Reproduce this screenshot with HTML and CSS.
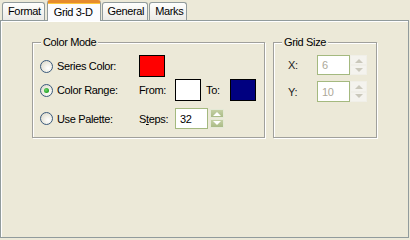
FILE: index.html
```html
<!DOCTYPE html>
<html>
<head>
<meta charset="utf-8">
<link rel="stylesheet" href="styles.css">
</head>
<body>
<div class="tabstrip">
  <div class="tab">Format</div>
  <div class="tab active">Grid 3-D</div>
  <div class="tab">General</div>
  <div class="tab">Marks</div>
</div>
<div class="panel">
  <fieldset class="group group-mode">
    <legend>Color Mode</legend>
    <div class="mode-grid">
      <label class="opt r1"><span class="radio"></span>Series Color:</label>
      <span class="swatch red r1 c2"></span>

      <label class="opt r2"><span class="radio checked"></span>Color Range:</label>
      <span class="lbl r2 c2">From:</span>
      <span class="swatch white r2 c3"></span>
      <span class="lbl to r2 c4">To:</span>
      <span class="swatch navy r2 c5"></span>

      <label class="opt r3"><span class="radio"></span>Use Palette:</label>
      <span class="lbl r3 c2">S<u>t</u>eps:</span>
      <div class="spinrow r3 c3">
        <span class="edit">32</span>
        <span class="spin">
          <span class="sbtn"><svg width="8" height="5" viewBox="0 0 8 5"><path d="M0 5 L4 1 L8 5 Z" fill="#fff"/></svg></span>
          <span class="sbtn"><svg width="8" height="5" viewBox="0 0 8 5"><path d="M0 0 L4 4 L8 0 Z" fill="#fff"/></svg></span>
        </span>
      </div>
    </div>
  </fieldset>
  <fieldset class="group group-size">
    <legend>Grid Size</legend>
    <div class="size-grid">
      <span class="lbl">X:</span>
      <div class="dspin">
        <span class="edit disabled">6</span>
        <span class="spin dis">
          <span class="sbtn"><svg width="8" height="5" viewBox="0 0 8 5"><path d="M0 5 L4 1 L8 5 Z" fill="#cac8bb"/></svg></span>
          <span class="sbtn"><svg width="8" height="5" viewBox="0 0 8 5"><path d="M0 0 L4 4 L8 0 Z" fill="#cac8bb"/></svg></span>
        </span>
      </div>
      <span class="lbl">Y:</span>
      <div class="dspin">
        <span class="edit disabled">10</span>
        <span class="spin dis">
          <span class="sbtn"><svg width="8" height="5" viewBox="0 0 8 5"><path d="M0 5 L4 1 L8 5 Z" fill="#cac8bb"/></svg></span>
          <span class="sbtn"><svg width="8" height="5" viewBox="0 0 8 5"><path d="M0 0 L4 4 L8 0 Z" fill="#cac8bb"/></svg></span>
        </span>
      </div>
    </div>
  </fieldset>
</div>
</body>
</html>
```

FILE: styles.css
```css
html, body {
  margin: 0;
  padding: 0;
}
body {
  width: 410px;
  height: 239px;
  overflow: hidden;
  background: #ECE9D8;
  font-family: "Liberation Sans", Arial, sans-serif;
  font-size: 11px;
  letter-spacing: -0.35px;
  color: #000;
}

.tabstrip {
  display: flex;
  align-items: flex-end;
  height: 20px;
  padding-left: 2px;
  position: relative;
  z-index: 1;
}
.tab {
  box-sizing: border-box;
  height: 18px;
  line-height: 17px;
  padding: 0 3px 0 5px;
  margin-right: 1px;
  border: 1px solid #919B9C;
  border-bottom: 0;
  border-radius: 3px 3px 0 0;
  background: linear-gradient(#fefefd, #ecebe6);
}
.tab.active {
  height: 21px;
  line-height: 18px;
  margin-bottom: -1px;
  margin-left: 1px;
  padding: 0 7px 0 6px;
  background: #fcfcfe;
  border-top: 3px solid #e68b2c;
  box-shadow: inset 0 1px 0 #ffc83c;
}

.panel {
  box-sizing: border-box;
  width: 409px;
  height: 218px;
  border: 1px solid #919B9C;
  box-shadow: inset 1px 1px 0 #fff;
  display: flex;
  align-items: flex-start;
  gap: 8px;
  padding: 15px 0 0 31px;
}

.group {
  box-sizing: border-box;
  margin: 0;
  min-inline-size: 0;
  border: 1px solid #a0a09c;
  box-shadow: 1px 1px 0 #fff, inset 1px 1px 0 #fff;
  padding: 6px 0 0 0;
  height: 102px;
}
.group legend {
  margin-left: 8px;
  padding: 0 2px;
  line-height: 13px;
  background: #ECE9D8;
}
.group-mode {
  width: 233px;
}
.group-size {
  width: 104px;
}

.mode-grid {
  display: grid;
  margin-left: 7px;
  grid-template-columns: 99px 36px 26px 29px 26px;
  grid-template-rows: 24px 29px 21px;
}
.mode-grid > * {
  align-self: start;
}
.r1 { grid-row: 1; height: 22px; }
.r2 { grid-row: 2; height: 22px; }
.r3 { grid-row: 3; height: 21px; }
.c2 { grid-column: 2; }
.c3 { grid-column: 3; }
.c4 { grid-column: 4; }
.c5 { grid-column: 5; }
.opt { grid-column: 1; }
.spinrow { grid-column: 3 / span 3; }

.opt, .lbl {
  display: flex;
  align-items: center;
}
.opt {
  gap: 4px;
}
.lbl.to {
  padding-left: 5px;
}
.lbl u {
  text-decoration-thickness: 1px;
  text-underline-offset: 1px;
}

.radio {
  box-sizing: border-box;
  width: 13px;
  height: 13px;
  border-radius: 50%;
  border: 1px solid #3a5a7c;
  background: radial-gradient(circle at 65% 65%, #ffffff 0%, #f2f1ea 35%, #d6d3c4 100%);
  display: flex;
  align-items: center;
  justify-content: center;
}
.radio.checked::after {
  content: "";
  width: 5px;
  height: 5px;
  border-radius: 50%;
  background: radial-gradient(circle at 40% 40%, #6fd66f, #21a121 70%);
}

.swatch {
  box-sizing: border-box;
  display: block;
  width: 26px;
  border: 1px solid #000;
}
.swatch.red { background: #ff0000; }
.swatch.white { background: #ffffff; }
.swatch.navy { background: #000080; }

.spinrow, .dspin {
  display: flex;
  align-items: stretch;
}
.spinrow {
  gap: 2px;
}
.edit {
  box-sizing: border-box;
  width: 33px;
  border: 1px solid #a4b97f;
  background: #fff;
  padding-left: 4px;
  display: flex;
  align-items: center;
}
.edit.disabled {
  color: #aca899;
}

.spin {
  box-sizing: border-box;
  width: 14px;
  display: flex;
  flex-direction: column;
  justify-content: center;
  gap: 1px;
  padding: 1px 0;
}
.sbtn {
  box-sizing: border-box;
  flex: 1;
  border: 1px solid #e4e9d6;
  background: linear-gradient(#c4d0a4, #aabb86);
  display: flex;
  align-items: center;
  justify-content: center;
}
.spin.dis {
  width: 17px;
  padding: 0;
  background: #fff;
  gap: 0;
}
.spin.dis .sbtn {
  border: 1px solid #f0efe8;
  background: #f4f3ee;
}

.size-grid {
  display: grid;
  margin-left: 14px;
  grid-template-columns: 29px 50px;
  grid-template-rows: 20px 21px;
  row-gap: 6px;
}
.size-grid .lbl {
  color: #222;
}
```
